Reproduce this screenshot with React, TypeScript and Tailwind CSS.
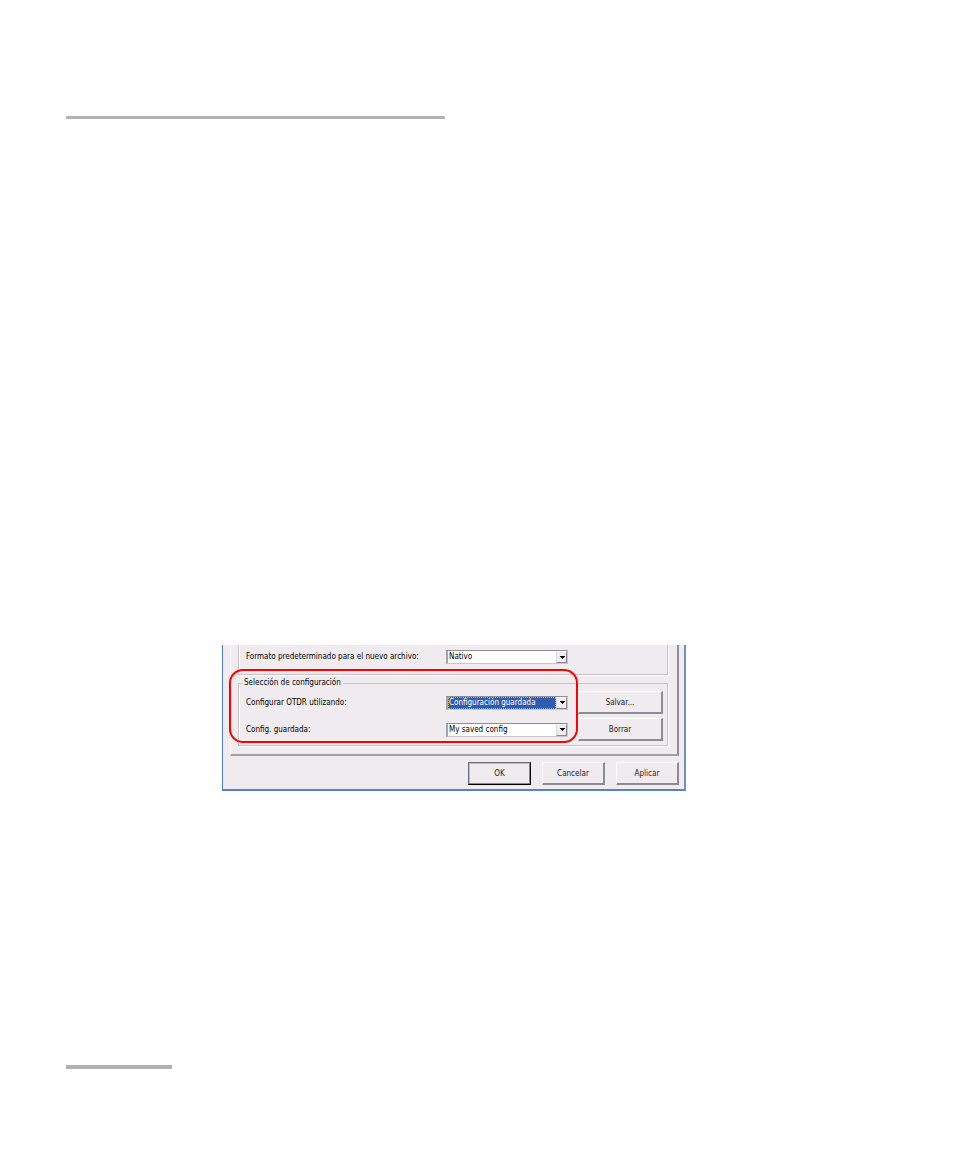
import type { ButtonHTMLAttributes, SelectHTMLAttributes } from 'react';

function Combo({
  options,
  active = false,
  ...rest
}: { options: string[]; active?: boolean } & SelectHTMLAttributes<HTMLSelectElement>) {
  return (
    <div className="flex h-[14px] w-[122px] border-t border-r border-b border-l-2 border-t-[#8c8d97] border-l-[#a3a3ac] border-r-[#c9c7cd] border-b-[#c9c7cd] bg-white">
      <div className="relative flex w-full pr-[11px]">
        <select
          {...rest}
          className={
            active
              ? 'h-full w-full appearance-none border border-dotted border-[#c8b468] bg-[#2f5cae] text-[8px] leading-[10px] text-white outline-none'
              : 'h-full w-full appearance-none bg-white pl-px text-[8px] leading-3 text-black outline-none'
          }
        >
          {options.map((o) => (
            <option key={o}>{o}</option>
          ))}
        </select>
        <span className="pointer-events-none absolute inset-y-0 right-0 flex w-[11px] items-center justify-end border-t border-r border-b border-l border-t-white border-l-[#dddbe0] border-r-[#85868f] border-b-[#85868f] bg-[#efebee] pr-px">
          <svg width="5" height="3" viewBox="0 0 5 3" shapeRendering="crispEdges" aria-hidden="true">
            <path d="M0 0h5v1H4v1H3v1H2V2H1V1H0z" fill="#000" />
          </svg>
        </span>
      </div>
    </div>
  );
}

function PushButton({
  primary = false,
  className = '',
  ...rest
}: { primary?: boolean } & ButtonHTMLAttributes<HTMLButtonElement>) {
  const frame = primary
    ? 'border border-t-[#6b707b] border-l-[#6b707b] border-r-black border-b-black shadow-[inset_-1px_-1px_0_#85868f,inset_1px_1px_0_#b9bbc2]'
    : 'border-t border-l border-r-2 border-b-2 border-t-white border-l-white border-r-[#8c8d92] border-b-[#8c8d92]';
  return (
    <button
      type="button"
      {...rest}
      className={`h-[23px] bg-[#efebee] pt-px text-center text-[8px] leading-3 text-[#222] ${frame} ${className}`}
    />
  );
}

export default function App() {
  return (
    <main className="flex min-h-screen flex-col bg-white pt-[116px] pb-[89px] font-['DejaVu_Sans_Condensed','DejaVu_Sans',sans-serif] text-[8px] leading-3 text-black">
      <div className="ml-[66px] h-[3px] w-[379px] bg-[#b2b2b2]" />

      <section className="mt-[526px] ml-[222px] w-[464px] border-r-2 border-b-2 border-l border-r-[#6f8fc8] border-b-[#5782c6] border-l-[#4f7dc6] bg-[#efebee] pr-[5px] pb-1 pl-[7px]">
        <div className="border-r-2 border-b-2 border-l border-r-[#8f9095] border-b-[#a0a1a6] border-l-white pr-[9px] pb-2 pl-[7px]">
          <div className="flex h-[30px] items-start border-r border-b border-l border-[#c5c3c8] pt-[5px] pl-[7px] shadow-[1px_1px_0_#fff,inset_1px_0_0_#fff]">
            <label htmlFor="formato" className="w-[200px] pt-px">
              Formato predeterminado para el nuevo archivo:
            </label>
            <Combo id="formato" options={['Nativo']} />
          </div>

          <div className="relative mt-[2px]">
            <fieldset className="border border-[#c5c3c8] pt-[2px] pr-1 pb-1 pl-[7px] shadow-[inset_1px_0_0_#fff,1px_1px_0_#fff]">
              <legend className="-ml-1 px-[2px]">Selección de configuración</legend>
              <div className="flex h-[23px] items-center">
                <label htmlFor="configurar" className="w-[200px]">
                  Configurar OTDR utilizando:
                </label>
                <Combo id="configurar" active options={['Configuración guardada']} />
                <PushButton className="ml-[10px] w-[85px]">Salvar...</PushButton>
              </div>
              <div className="mt-1 flex h-[23px] items-center">
                <label htmlFor="guardada" className="w-[200px]">
                  Config. guardada:
                </label>
                <Combo id="guardada" options={['My saved config']} />
                <PushButton className="ml-[10px] w-[85px]">Borrar</PushButton>
              </div>
            </fieldset>
            <div className="pointer-events-none absolute -top-2 -left-[9px] h-[74px] w-[349px] rounded-[14px] border-2 border-[#ff0000]" />
          </div>
        </div>

        <div className="mt-[6px] flex justify-end gap-[11px]">
          <PushButton primary className="w-[63px]">OK</PushButton>
          <PushButton className="w-[63px]">Cancelar</PushButton>
          <PushButton className="w-[63px]">Aplicar</PushButton>
        </div>
      </section>

      <div className="mt-[274px] ml-[66px] h-1 w-[106px] bg-[#b2b2b2]" />
    </main>
  );
}
